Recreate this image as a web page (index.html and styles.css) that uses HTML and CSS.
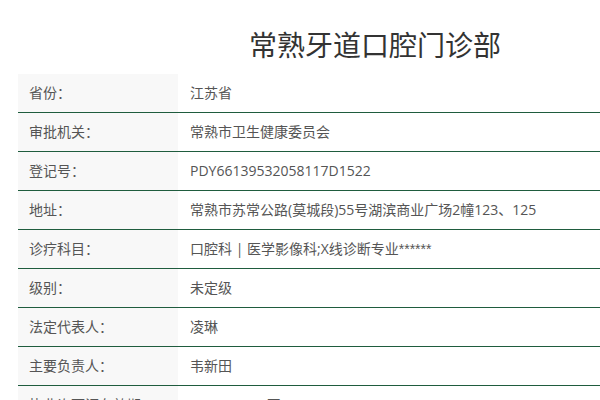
FILE: index.html
```html
<!DOCTYPE html>
<html lang="zh-CN">
<head>
<meta charset="utf-8">
<title>常熟牙道口腔门诊部</title>
<link rel="stylesheet" href="styles.css">
</head>
<body>
<div class="wrap">
  <h1 class="title">常熟牙道口腔门诊部</h1>
  <table class="info">
    <tbody>
      <tr><th>省份：</th><td>江苏省</td></tr>
      <tr><th>审批机关：</th><td>常熟市卫生健康委员会</td></tr>
      <tr><th>登记号：</th><td>PDY66139532058117D1522</td></tr>
      <tr><th>地址：</th><td>常熟市苏常公路(莫城段)55号湖滨商业广场2幢123、125</td></tr>
      <tr><th>诊疗科目：</th><td>口腔科 | 医学影像科;X线诊断专业<span class="stars">******</span></td></tr>
      <tr><th>级别：</th><td>未定级</td></tr>
      <tr><th>法定代表人：</th><td>凌琳</td></tr>
      <tr><th>主要负责人：</th><td>韦新田</td></tr>
      <tr><th>执业许可证有效期：</th><td>2019-09-04 至 2034-09-03</td></tr>
    </tbody>
  </table>
</div>
</body>
</html>
```

FILE: styles.css
```css
html, body {
  margin: 0;
  padding: 0;
  overflow: hidden;
  background: #fff;
}
body {
  font-family: "Open Sans", "Noto Sans CJK SC", sans-serif;
  color: #555;
}
.wrap {
  width: 714px;
  margin-left: 18px;
  padding-top: 24px;
}
.title {
  margin: 0 0 10px;
  height: 40px;
  line-height: 40px;
  font-family: "Noto Sans CJK SC", sans-serif;
  font-size: 28px;
  font-weight: 400;
  color: #333;
  text-align: center;
}
.info {
  width: 100%;
  border-collapse: collapse;
  font-size: 14px;
}
.info th, .info td {
  height: 38px;
  padding: 0 12px;
  border-bottom: 1px solid #1f5c3e;
  text-align: left;
  font-weight: 400;
  line-height: 20px;
  vertical-align: middle;
  white-space: nowrap;
}
.info th {
  width: 136px;
  padding-left: 11px;
  padding-right: 13px;
  background: #f8f8f8;
  color: #555;
}
.info td {
  color: #555;
}
.stars {
  font-family: "Liberation Sans", sans-serif;
}
```
